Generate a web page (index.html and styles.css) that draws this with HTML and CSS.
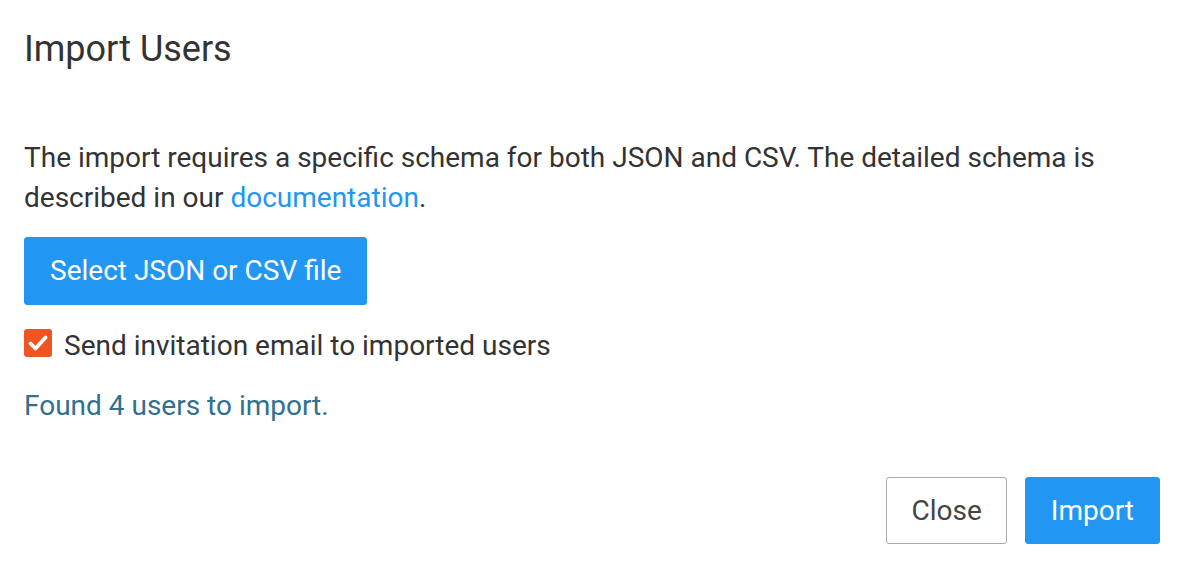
FILE: index.html
```html
<!DOCTYPE html>
<html lang="en">

<head>
    <meta charset="UTF-8">
    <meta name="viewport" content="width=device-width, initial-scale=1.0">
    <title>Import Users</title>
    <link rel="stylesheet" href="styles.css">
</head>

<body>

    <div class="modal">
        <div class="modal-header">
            <h1>Import Users</h1>
        </div>

        <div class="modal-body">
            <p class="intro">The import requires a specific schema for both JSON and CSV. The detailed schema is
                described in our <a href="#">documentation</a>.</p>

            <button class="btn btn-primary btn-file">Select JSON or CSV file</button>

            <label class="check-row">
                <span class="checkbox">
                    <svg width="28" height="28" viewBox="0 0 28 28">
                        <path d="M6.5 14.5 L11.5 19.5 L21.5 8.5" fill="none" stroke="#fff" stroke-width="3.8"
                            stroke-linecap="round" stroke-linejoin="round" />
                    </svg>
                </span>
                Send invitation email to imported users
            </label>

            <p class="found">Found 4 users to import.</p>
        </div>

        <div class="modal-footer">
            <button class="btn btn-default">Close</button>
            <button class="btn btn-primary">Import</button>
        </div>
    </div>

</body>

</html>
```

FILE: styles.css
```css
* {
    margin: 0;
    padding: 0;
    box-sizing: border-box;
}

body {
    font-family: Roboto, 'Liberation Sans', sans-serif;
    background-color: #fff;
    color: #333;
    font-size: 28px;
    line-height: 40px;
}

.modal {
    width: 1178px;
    height: 566px;
    display: flex;
    flex-direction: column;
}

.modal-header {
    padding: 28px 24px 0;
}

h1 {
    font-size: 36px;
    font-weight: 400;
    line-height: 1.2;
    color: #333;
}

.modal-body {
    padding: 0 24px;
    display: flex;
    flex-direction: column;
    align-items: flex-start;
}

.intro {
    margin-top: 67px;
}

.intro a {
    color: #2196f3;
    text-decoration: none;
}

.btn {
    font-family: inherit;
    font-size: 28px;
    line-height: 40px;
    border-radius: 3px;
    border: 1px solid transparent;
    padding: 13px 25px;
    cursor: pointer;
}

.btn-primary {
    background-color: #2196f3;
    border-color: #2196f3;
    color: #fff;
}

.btn-default {
    background-color: #fff;
    border: 1.5px solid #aaa;
    color: #444;
}

.btn-file {
    margin-top: 19px;
}

.modal-footer .btn {
    padding: 12.5px 25px;
}

.modal-footer .btn-default {
    padding: 12.5px 24px;
}

.check-row {
    display: flex;
    align-items: flex-start;
    gap: 12px;
    margin-top: 21px;
    cursor: pointer;
}

.checkbox {
    width: 28px;
    height: 28px;
    margin-top: 3px;
    border-radius: 3px;
    background-color: #ee5522;
    display: flex;
    align-items: center;
    justify-content: center;
}

.found {
    margin-top: 20px;
    color: #31708f;
}

.modal-footer {
    margin-top: auto;
    padding: 0 18px 22px 24px;
    display: flex;
    justify-content: flex-end;
    gap: 18px;
}
```
